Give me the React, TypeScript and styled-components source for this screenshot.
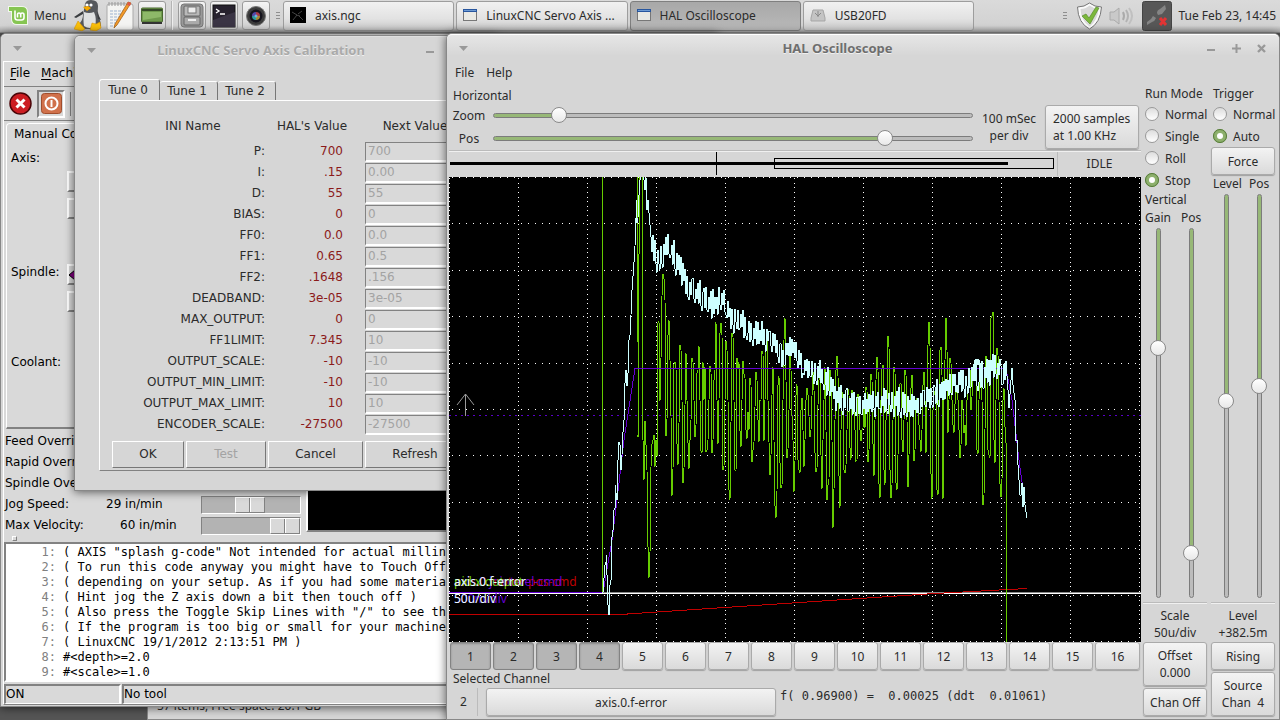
import React from 'react'
import styled, { createGlobalStyle, css } from 'styled-components'

const GlobalStyle = createGlobalStyle`
  * {
    box-sizing: border-box;
  }

  body {
    margin: 0;
    overflow: hidden;
    background: #555;
  }

  button, input {
    font: inherit;
    color: inherit;
    margin: 0;
  }
`

const gtkFont = css`
  font-family: 'Noto Sans', 'Open Sans', sans-serif;
  font-size: 12px;
  line-height: 17px;
  color: #2b2b2b;
`

const tkFont = css`
  font-family: 'DejaVu Sans', sans-serif;
  font-size: 12px;
  line-height: 17px;
`

const raised = css`
  border: 2px solid;
  border-color: #fff #828282 #828282 #fff;
`

const sunken = css`
  border: 2px solid;
  border-color: #828282 #fff #fff #828282;
`

const Desktop = styled.div`
  position: relative;
  height: 100vh;
  overflow: hidden;
  ${gtkFont}
`

/* ---------- panel ---------- */

const Panel = styled.header`
  display: flex;
  align-items: center;
  height: 33px;
  padding: 0 4px 1px 8px;
  background: linear-gradient(#dadada, #d2d2d2 80%, #a9a9a9);
  border-bottom: 1px solid #8a8a8a;
`

const MenuButton = styled.button`
  display: flex;
  align-items: center;
  gap: 6px;
  width: 66px;
  padding: 0;
  border: 0;
  background: none;
`

const Launchers = styled.nav`
  display: flex;
  align-items: center;
  gap: 4px;
`

const Launcher = styled.button<{ $flat?: boolean }>`
  display: flex;
  align-items: center;
  justify-content: center;
  width: 28px;
  height: 29px;
  padding: 0;
  border: ${p => (p.$flat ? '0' : '1px solid #9b9b9b')};
  border-radius: 3px;
  background: ${p => (p.$flat ? 'none' : 'linear-gradient(#f4f4f4, #cfcfcf)')};
`

const PanelLine = styled.span`
  width: 2px;
  height: 29px;
  margin: 0 1px;
  border-left: 1px solid #b4b4b4;
  border-right: 1px solid #eee;
`

const Handle = styled.span`
  width: 4px;
  height: 7px;
  margin: 0 3px 0 6px;
  background: repeating-linear-gradient(#8e8e8e 0 1px, transparent 1px 3px);
`

const Tasks = styled.div`
  display: flex;
  gap: 2px;
  flex: 0 1 691px;
`

const Task = styled.button<{ $active?: boolean }>`
  display: flex;
  align-items: center;
  gap: 9px;
  flex: 1;
  height: 30px;
  padding: 0 0 1px 6px;
  border: 1px solid ${p => (p.$active ? '#7f7f7f' : '#9d9d9d')};
  border-radius: 3px;
  background: ${p => (p.$active ? 'linear-gradient(#a8a8a8, #b9b9b9)' : 'linear-gradient(#f1f1f1, #e2e2e2 60%, #c8c8c8)')};
  white-space: nowrap;
`

const Tray = styled.div`
  display: flex;
  align-items: center;
  gap: 6px;
  margin-left: auto;
`

/* ---------- window frame ---------- */

const Window = styled.section<{ $x: number; $y: number; $w?: number; $h?: number }>`
  position: absolute;
  left: ${p => p.$x}px;
  top: ${p => p.$y}px;
  ${p => (p.$w ? `width: ${p.$w}px;` : 'right: 0;')}
  ${p => (p.$h ? `height: ${p.$h}px;` : 'bottom: 0;')}
  display: flex;
  flex-direction: column;
  border: 1px solid #888;
  border-radius: 6px 6px 0 0;
  background: #d6d6d6;
  box-shadow: 0 1px 10px rgba(0, 0, 0, 0.6);
`

const TitleBar = styled.header<{ $dim?: boolean }>`
  display: flex;
  align-items: center;
  flex: 0 0 27px;
  padding: 0 12px 0 11px;
  border-top: 1px solid ${p => (p.$dim ? '#e0e0e0' : '#fff')};
  border-radius: 5px 5px 0 0;
  background: ${p => (p.$dim ? '#d6d6d6' : 'linear-gradient(#e6e6e6, #d6d6d6 80%)')};
  color: ${p => (p.$dim ? '#aaa' : '#6e6e6e')};
  text-shadow: 0 1px #f0f0f0;
`

const WindowTitle = styled.h1`
  flex: 1;
  margin: 0;
  padding: 0 7px;
  font-size: 13px;
  line-height: 17px;
  font-weight: 700;
  text-align: center;
`

const TitleButton = styled.button`
  display: flex;
  justify-content: center;
  width: 11px;
  padding: 0;
  border: 0;
  background: none;
  color: #999;
`

const TitleButtons = styled.div`
  display: flex;
  gap: 14px;
`

/* ---------- axis ---------- */

const AxisBody = styled.div`
  display: flex;
  flex-direction: column;
  flex: 1;
  min-height: 0;
  margin: 0 2px 1px;
  border: 1px solid;
  border-color: #fff #828282 #828282 #fff;
  background: #d9d9d9;
  color: #000;
  ${tkFont}
`

const AxisMenu = styled.nav`
  display: flex;
  gap: 11px;
  padding: 3px 6px 4px;
  border-bottom: 1px solid #828282;

  u {
    text-underline-offset: 2px;
  }
`

const AxisTools = styled.div`
  display: flex;
  align-items: center;
  gap: 5px;
  flex: 0 0 34px;
  padding: 0 5px;
  border-bottom: 1px solid #828282;
`

const ToolButton = styled.button<{ $pressed?: boolean }>`
  display: flex;
  align-items: center;
  justify-content: center;
  width: ${p => (p.$pressed ? 28 : 23)}px;
  height: 28px;
  padding: 0;
  border: 0;
  background: none;
  ${p => p.$pressed && sunken}
`

const ToolLine = styled.span`
  height: 24px;
  border-left: 1px solid #828282;
`

const ManualTab = styled.div`
  width: 120px;
  margin: 2px 0 0 2px;
  padding: 2px 7px 1px;
  border: solid #fff;
  border-width: 1px 0 0 1px;
  border-radius: 4px 0 0 0;
`

const ManualPane = styled.div`
  display: grid;
  grid-template-columns: 56px 90px;
  grid-template-rows: 21px 48px 45px 48px 42px auto;
  flex: 0 0 285px;
  margin-left: 2px;
  padding: 6px 4px;
  border: solid;
  border-width: 0 2px 2px 1px;
  border-color: #fff #828282 #828282 #fff;
`

const PaneLabel = styled.span<{ $row: number }>`
  grid-row: ${p => p.$row};
`

const ButtonPair = styled.div<{ $row: number }>`
  display: flex;
  flex-direction: column;
  gap: 6px;
  grid-column: 2;
  grid-row: ${p => p.$row};
`

const PaneButton = styled.button`
  ${raised}
  display: flex;
  align-items: center;
  height: 21px;
  padding: 0;
  background: #d9d9d9;
`

const OverrideArea = styled.div`
  display: flex;
`

const Overrides = styled.div`
  display: grid;
  grid-template-columns: 92px 104px 104px;
  grid-auto-rows: 21px;
  align-items: center;
  padding: 2px 0 0 1px;
  white-space: nowrap;
`

const WideLabel = styled.span`
  grid-column: 1 / -1;
`

const Readout = styled.span<{ $inset: number }>`
  padding-left: ${p => p.$inset}px;
`

const TkRange = styled.input`
  appearance: none;
  width: 100px;
  height: 18px;
  border: 1px solid;
  border-color: #828282 #fff #fff #828282;
  background: #b3b3b3;

  &::-webkit-slider-thumb {
    appearance: none;
    width: 30px;
    height: 16px;
    border: 1px solid;
    border-color: #fff #828282 #828282 #fff;
    background: linear-gradient(90deg, #d9d9d9 13px, #828282 13px 14px, #fff 14px 15px, #d9d9d9 15px);
  }
`

const Preview = styled.div`
  flex: 1;
  margin: 0 0 4px 1px;
  border: 2px solid;
  border-color: #fff #828282 #828282 #fff;
  background: #000;
`

const Sash = styled.div`
  flex: none;
  width: 5px;
  height: 5px;
  margin: 0 0 1px 8px;
  border: 1px solid;
  border-color: #fff #828282 #828282 #fff;
`

const Listing = styled.ol`
  flex: 1;
  min-height: 0;
  margin: 0;
  padding: 1px 0;
  list-style: none;
  overflow: hidden;
  ${sunken}
  background: #fff;
  font-family: 'DejaVu Sans Mono', monospace;
  font-size: 12px;
  line-height: 15px;
`

const CodeLine = styled.li`
  display: flex;
  gap: 7px;
  white-space: pre;
`

const LineNo = styled.span`
  width: 50px;
  color: #808080;
  text-align: right;
`

const StatusBar = styled.footer`
  display: grid;
  grid-template-columns: 117px 1fr;
  gap: 1px;
  padding: 2px 0 0;
`

const StatusCell = styled.div`
  ${sunken}
  border-bottom-width: 1px;
`

/* ---------- calibration ---------- */

const CalBody = styled.div`
  display: flex;
  flex-direction: column;
  flex: 1;
  padding: 16px 20px 21px 24px;
  ${tkFont}
`

const Tabs = styled.div`
  display: flex;
  align-items: flex-end;
`

const Tab = styled.button<{ $on?: boolean }>`
  width: ${p => (p.$on ? 61 : 58)}px;
  height: ${p => (p.$on ? 22 : 19)}px;
  margin-bottom: ${p => (p.$on ? -1 : 0)}px;
  padding: 0 3px 0 0;
  border: solid;
  border-width: 1px 1px 0 ${p => (p.$on ? 1 : 0)}px;
  border-color: #fff #777 #fff #fff;
  border-radius: 3px 3px 0 0;
  background: #d6d6d6;
`

const TabPane = styled.div`
  flex: 1;
  padding: 14px 0 2px 12px;
  border: 1px solid;
  border-color: #fff #828282 #828282 #fff;
`

const ParamTable = styled.table`
  width: 368px;
  table-layout: fixed;
  border-collapse: collapse;

  th, td {
    height: 21px;
    padding: 0;
    font-weight: 400;
  }

  thead th {
    height: 26px;
    padding-bottom: 4px;
  }

  tbody th {
    padding-right: 9px;
    text-align: right;
  }
`

const HalValue = styled.td`
  && {
    padding-right: 7px;
    color: #8b1a1a;
    text-align: right;
  }
`

const Entry = styled.input`
  display: block;
  width: 100px;
  height: 20px;
  margin-left: 15px;
  padding: 0 2px;
  ${sunken}
  border-width: 1px 2px 2px 1px;
  background: #d9d9d9;
  color: #a3a3a3;
`

const CalActions = styled.div`
  display: flex;
  gap: 2px;
  margin-top: 6px;
`

const TkButton = styled.button<{ $w: number }>`
  width: ${p => p.$w}px;
  height: 27px;
  padding: 0;
  border: 1px solid;
  border-color: #fff #777 #777 #fff;
  background: #d6d6d6;

  &:disabled {
    color: #a3a3a3;
  }
`

/* ---------- oscilloscope ---------- */

const ScopeMenu = styled.nav`
  display: flex;
  gap: 12px;
  flex: 0 0 23px;
  padding: 3px 8px;
`

const ScopeBody = styled.div`
  display: flex;
  flex: 1;
  min-height: 0;
  padding: 0 0 3px 2px;
`

const ScopeMain = styled.div`
  display: flex;
  flex-direction: column;
  flex: 1;
  min-width: 0;
`

const ScopeSide = styled.div`
  display: grid;
  grid-template-columns: 64px 64px;
  grid-template-rows: minmax(0, 1fr);
  gap: 4px;
  flex: 0 0 138px;
  padding: 1px 4px 0 2px;
`

const SideColumn = styled.div`
  display: flex;
  flex-direction: column;
  min-width: 0;
  min-height: 0;
`

const SideLabel = styled.div`
  padding-left: 2px;
  height: 18px;
  white-space: nowrap;
`

const SliderLabels = styled.div`
  display: grid;
  grid-template-columns: 30px 1fr;
  gap: 6px;
  height: 19px;
  padding-left: 2px;
  white-space: nowrap;
`

const RadioLabel = styled.label`
  display: flex;
  align-items: center;
  gap: 6px;
  height: 22px;
  padding-left: 2px;
`

const Radio = styled.input`
  appearance: none;
  flex: none;
  width: 14px;
  height: 14px;
  border: 1px solid #999;
  border-radius: 50%;
  background: linear-gradient(#ddd, #fff);

  &:checked {
    border: 4px solid #8db06c;
    outline: 1px solid #567a39;
    outline-offset: -1px;
    background: #fff;
  }
`

const GtkButton = styled.button<{ $on?: boolean; $left?: boolean }>`
  min-height: 28px;
  padding: 0 ${p => (p.$left ? 7 : 1)}px;
  border: 1px solid ${p => (p.$on ? '#838383' : '#aaa')};
  border-radius: 3px;
  background: ${p => (p.$on ? '#b5b5b5' : 'linear-gradient(#f3f3f3, #dadada)')};
  box-shadow: ${p => (p.$on ? 'inset 0 1px 2px #8a8a8a' : '0 1px 1px rgba(0, 0, 0, 0.25)')};
  text-align: ${p => (p.$left ? 'left' : 'center')};
  white-space: pre;
`

const TallButton = styled(GtkButton)`
  flex: 1;
`

const TimebaseButton = styled(GtkButton)`
  height: 44px;
`

const knob = css`
  appearance: none;
  width: 16px;
  height: 16px;
  border: 1px solid #8a8a8a;
  border-radius: 50%;
  background: linear-gradient(#fff, #e8e8e8);
`

const HRange = styled.input`
  appearance: none;
  width: 100%;
  height: 16px;
  background: none;

  &::-webkit-slider-runnable-track {
    height: 5px;
    border: 1px solid #7c7c7c;
    border-radius: 3px;
    background: linear-gradient(90deg, #97b877 ${p => Number(p.defaultValue) / 10}%, #bcbcbc 0);
  }

  &::-webkit-slider-thumb {
    ${knob}
    margin-top: -7px;
  }
`

const VRange = styled.input`
  appearance: none;
  writing-mode: vertical-lr;
  align-self: stretch;
  width: 16px;
  background: none;

  &::-webkit-slider-runnable-track {
    width: 5px;
    border: 1px solid #7c7c7c;
    border-radius: 3px;
    background: linear-gradient(#97b877 ${p => Number(p.defaultValue) / 10}%, #bcbcbc 0);
  }

  &::-webkit-slider-thumb {
    ${knob}
    margin-left: -7px;
  }
`

const VSliders = styled.div`
  display: flex;
  gap: 17px;
  flex: 1;
  min-height: 0;
  padding: 0 0 0 7px;
`

const SideReadout = styled.div`
  margin: 4px 0 0;
  padding: 4px 0 1px;
  border-top: 1px solid #bbb;
  box-shadow: inset 0 1px #f0f0f0;
  text-align: center;
`

const SideButtons = styled.div`
  display: flex;
  flex-direction: column;
  gap: 2px;
  flex: 0 0 74px;
`

const HorizontalRow = styled.div`
  display: grid;
  grid-template-columns: minmax(0, 1fr) 72px 94px;
  align-items: center;
  padding-right: 2px;
  border-bottom: 1px solid #bbb;
`

const HSliders = styled.div`
  display: grid;
  grid-template-columns: 40px minmax(0, 1fr);
  grid-auto-rows: 23px;
  align-items: center;
  column-gap: 4px;
  text-align: center;
`

const Centered = styled.div`
  text-align: center;
`

const GroupTitle = styled.div`
  flex: 0 0 20px;
  padding: 3px 4px 0;
`

const OverviewRow = styled.div`
  display: grid;
  grid-template-columns: minmax(0, 1fr) 84px;
  align-items: start;
  flex: 0 0 26px;
  border-top: 1px solid #f0f0f0;

  svg {
    display: block;
    width: 100%;
    height: 24px;
  }
`

const Status = styled.div`
  height: 24px;
  padding-top: 3px;
  border-left: 1px solid #bbb;
  text-align: center;
`

const Plot = styled.svg`
  display: block;
  flex: 1;
  width: 100%;
  min-height: 0;
  background: #000;
`

const Channels = styled.div`
  display: grid;
  grid-template-columns: repeat(15, minmax(0, 41fr)) minmax(0, 45fr);
  gap: 2px;
  padding: 0 1px;
`

const SelectedTitle = styled.div`
  height: 18px;
  padding: 0 4px;
`

const ChannelBar = styled.div`
  display: grid;
  grid-template-columns: 28px 290px 1fr;
  gap: 8px;
  padding: 0 1px;
`

const ChannelNo = styled.div`
  padding-top: 5px;
  border-right: 1px solid #bbb;
  text-align: center;
`

const Probe = styled.output`
  margin-left: -4px;
  font-family: 'DejaVu Sans Mono', monospace;
  font-size: 12px;
  white-space: pre;
`

const FileManager = styled.div`
  position: absolute;
  left: 147px;
  right: 0;
  bottom: 0;
  height: 24px;
  padding: 0 9px;
  border: 1px solid #888;
  background: #d6d6d6;
`

/* ---------- data ---------- */

const params = [
  ['P', '700', '700'],
  ['I', '.15', '0.00'],
  ['D', '55', '55'],
  ['BIAS', '0', '0'],
  ['FF0', '0.0', '0.0'],
  ['FF1', '0.65', '0.5'],
  ['FF2', '.1648', '.156'],
  ['DEADBAND', '3e-05', '3e-05'],
  ['MAX_OUTPUT', '0', '0'],
  ['FF1LIMIT', '7.345', '10'],
  ['OUTPUT_SCALE', '-10', '-10'],
  ['OUTPUT_MIN_LIMIT', '-10', '-10'],
  ['OUTPUT_MAX_LIMIT', '10', '10'],
  ['ENCODER_SCALE', '-27500', '-27500'],
]

const gcode = [
  '( AXIS "splash g-code" Not intended for actual milling )',
  '( To run this code anyway you might have to Touch Off the Z axis',
  '( depending on your setup. As if you had some material in your mill',
  '( Hint jog the Z axis down a bit then touch off )',
  '( Also press the Toggle Skip Lines with "/" to see that part',
  '( If the program is too big or small for your machine, change',
  '( LinuxCNC 19/1/2012 2:13:51 PM )',
  '#<depth>=2.0',
  '#<scale>=1.0',
]

// pid output, screen units
const outputTrace =
  '602,592 602,160 637,160 637,342 638,340 638,437 639,255 640,177 642,160 642,425 643,440 644,480 645,421 646,445 647,470 648,547 649,578 650,553 651,467 652,444 653,440 654,435 655,467 656,440 657,456 ' +
  '657,390 658,323 659,321 660,401 661,358 662,296 663,274 664,279 665,300 666,436 667,420 668,335 669,320 670,360 671,416 672,496 673,470 674,364 675,362 676,368 677,444 678,465 679,424 680,345 681,350 ' +
  '682,400 683,483 684,468 685,405 686,353 687,400 688,443 689,469 690,440 691,420 692,358 693,362 695,437 696,425 697,373 698,370 699,346 700,400 701,451 702,453 703,362 704,400 705,367 706,452 707,450 ' +
  '708,440 709,400 710,366 711,372 712,453 713,440 714,380 715,370 716,322 717,400 718,444 719,400 720,333 721,323 722,335 723,470 724,467 725,400 726,341 727,350 728,400 729,490 730,500 731,423 732,333 ' +
  '733,337 734,400 735,470 736,471 737,358 738,368 739,362 740,431 741,447 742,400 743,361 744,374 745,378 746,430 747,439 748,412 749,430 750,378 751,385 752,462 753,450 754,442 755,407 756,372 757,380 ' +
  '758,420 759,442 760,400 761,400 762,351 763,354 764,441 765,400 766,350 767,331 768,400 769,442 770,475 771,455 772,395 773,367 774,440 775,506 776,518 777,492 778,385 779,376 780,463 781,488 782,486 ' +
  '783,400 784,340 785,318 786,380 787,458 788,449 789,410 790,352 791,370 792,416 793,440 794,492 795,462 796,395 797,384 798,460 799,470 800,473 801,410 802,398 803,430 804,467 805,440 806,400 807,388 ' +
  '808,395 810,437 811,430 812,396 813,372 814,390 815,453 816,472 817,468 818,405 819,380 820,375 821,455 822,489 823,440 824,400 825,367 826,430 827,500 828,485 829,480 830,370 831,380 832,440 833,528 ' +
  '834,490 835,420 836,370 837,356 838,376 839,476 840,508 841,430 842,392 843,398 844,470 845,473 846,465 847,430 848,389 849,395 850,448 851,460 852,390 853,395 854,408 855,430 856,461 857,460 858,394 ' +
  '859,400 860,430 861,441 862,430 863,428 864,400 865,428 866,387 867,390 868,462 869,450 870,395 871,374 872,380 873,444 874,476 875,420 876,380 877,357 878,370 879,484 880,498 881,400 882,369 883,365 ' +
  '884,470 885,485 886,420 887,400 888,336 889,347 890,470 891,498 892,485 893,420 894,367 895,372 896,483 897,490 898,455 899,400 900,384 901,383 902,440 903,452 904,420 905,370 906,375 907,420 908,487 ' +
  '909,455 910,400 911,388 912,375 913,400 914,461 915,450 916,400 917,398 918,405 919,425 920,440 921,452 922,430 923,385 924,372 925,400 926,453 927,390 928,345 929,322 930,346 931,474 932,499 933,410 ' +
  '934,395 936,387 937,490 938,495 939,400 940,350 941,347 942,375 943,499 944,400 945,360 946,318 947,350 948,433 949,400 950,358 951,363 952,400 953,425 954,433 955,404 956,391 957,393 958,400 959,430 ' +
  '960,458 961,445 962,400 963,410 964,433 965,425 966,446 967,400 968,390 970,369 971,410 972,397 973,372 974,365 976,368 977,450 978,454 979,400 980,378 981,375 982,400 983,505 984,495 985,430 986,356 ' +
  '987,363 988,450 989,455 990,458 991,318 992,316 993,312 994,440 995,463 996,400 997,348 998,355 999,400 1000,484 1001,497 1002,480 1003,400 1004,388 1005,427 1006,443 1006,642'

const errorRise =
  '449,592 603,592 604,578 605,565 606,562 606,555 607,575 607,600 608,605 609,615 609,590 611,580 611,545 613,530 614,510 615,508 615,485 617,500 617,475 618,460 619,442 620,445 621,470 622,455 623,432 ' +
  '624,420 624,400 625,383 626,370 627,386 628,373 629,340 630,335 631,315 632,290 634,262 635,246 636,218 636,200 637,223 638,218 639,195 640,180 641,174 643,170 645,190 646,178 647,210 648,200 650,225 651,237 652,252'

const errorFall =
  '1008,390 1009,408 1011,380 1012,368 1013,385 1015,400 1015,440 1017,440 1018,465 1020,495 1021,495 1022,483 1023,507 1024,487 1025,505 1026,512 1026,518'

// centre and swing of the f-error band
const errorBand = [
  [652, 240, 13], [657, 262, 14], [662, 255, 15], [667, 247, 16], [671, 250, 14], [676, 262, 16], [682, 272, 15], [688, 290, 15],
  [697, 295, 16], [702, 298, 14], [708, 305, 14], [714, 308, 16], [720, 300, 13], [726, 305, 14], [731, 320, 13], [740, 320, 14],
  [747, 330, 14], [757, 335, 14], [769, 338, 14], [776, 346, 14], [783, 360, 12], [790, 345, 14], [797, 352, 13], [802, 366, 13],
  [810, 369, 14], [820, 375, 14], [828, 382, 16], [835, 395, 15], [842, 402, 15], [850, 405, 13], [860, 407, 12], [870, 405, 13],
  [880, 402, 14], [890, 402, 14], [900, 404, 14], [910, 408, 13], [920, 405, 13], [927, 398, 15], [935, 397, 16], [945, 390, 14],
  [957, 380, 12], [965, 385, 15], [975, 375, 15], [983, 378, 15], [990, 372, 16], [995, 365, 13], [1000, 375, 15], [1007, 375, 15],
]

const swing = [-1, 0.6, 0.9, -0.7, 0.3, -0.9, 0.8]

const bandPoints = () => {
  const out: string[] = []
  let seg = 0
  for (let x = 652; x < 1007; x += 1) {
    while (x > errorBand[seg + 1][0]) seg += 1
    const [x0, y0, a0] = errorBand[seg]
    const [x1, y1, a1] = errorBand[seg + 1]
    const t = (x - x0) / (x1 - x0)
    const mid = y0 + (y1 - y0) * t
    const amp = a0 + (a1 - a0) * t
    const rnd = Math.abs(Math.sin(x * 12.9898) * 43758.5453) % 1
    const side = swing[(x + Math.floor(x / 11)) % 7]
    out.push(`${x},${Math.round(mid + side * amp * (0.5 + 0.7 * rnd))}`)
  }
  return out.join(' ')
}

const errorTrace = `${errorRise} ${bandPoints()} ${errorFall}`
const steps = Array.from({ length: 11 }, (_, i) => i)

/* ---------- icons ---------- */

const WinMenuIcon = () => (
  <svg width="11" height="7"><path d="M1 1h9L5.500 6z" fill="currentColor" /></svg>
)

const MinIcon = () => (
  <svg width="9" height="9"><path d="M0 6h8" stroke="currentColor" strokeWidth="2" /></svg>
)

const MaxIcon = () => (
  <svg width="9" height="9"><path d="M0 4.500h9M4.500 0v9" stroke="currentColor" strokeWidth="2" /></svg>
)

const CloseIcon = () => (
  <svg width="9" height="9"><path d="M1 1l7 7M8 1l-7 7" stroke="currentColor" strokeWidth="2.400" /></svg>
)

const MintIcon = () => (
  <svg width="20" height="19" viewBox="0 0 20 19">
    <path d="M0 0h14q6 0 6 6v13H9q-6 0-6-6V6H0z" fill="#f2f8ec" />
    <path d="M1 1h13q5 0 5 5v12H9q-5 0-5-5V5H1z" fill="#86c552" />
    <path d="M7 4.500v7q0 2.500 2.500 2.500h4q2.500 0 2.500-2.500V9q0-2-1.700-2T12.700 9v2.500M12.700 9q0-2-1.700-2T9.500 9v2.500" fill="none" stroke="#fff" strokeWidth="1.600" />
  </svg>
)

const TuxIcon = () => (
  <svg width="28" height="31" viewBox="0 0 28 31">
    <path d="M11 4q1-4 6-4 7 0 7 6-1 5 1 11t2 9l-5 3H8l-3-5q4-4 4-9z" fill="#55585c" />
    <path d="M10 12q5 2 10 0 3 7 1 14-5 4-11 0-1-5 0-14z" fill="#dfe1e2" />
    <path d="M9 11L0 17l2 1 7-4zM23 12l4 8-3-1z" fill="#3a3d40" />
    <circle cx="13" cy="5" r="1.600" fill="#fff" /><circle cx="17" cy="5" r="1.600" fill="#fff" />
    <path d="M9 7l5-1 3 2-4 3z" fill="#f5a800" />
    <path d="M4 21l7 8-3 2-8-2zM18 23l4 1 4-2 1 6-5 3-6-1z" fill="#fbc10b" stroke="#d58b00" strokeWidth=".5" />
  </svg>
)

const NotesIcon = () => (
  <svg width="28" height="30" viewBox="0 0 28 30">
    <rect x="1" y="3" width="26" height="26" rx="2" fill="#f4f4f2" stroke="#aaa" />
    <path d="M3 1v4M6 1v4M9 1v4M12 1v4M15 1v4M18 1v4" stroke="#999" />
    <path d="M4 10h15M4 13h13M4 16h11M4 19h9M4 22h6M4 25h5" stroke="#9eb3cf" strokeDasharray="3 1" />
    <path d="M22 1l3 1-14 22-3 3 1-4z" fill="#f49a28" stroke="#9a5a14" strokeWidth=".7" />
    <path d="M22 1l3 1-1 3-3-1z" fill="#de5746" />
  </svg>
)

const DesktopIcon = () => (
  <svg width="22" height="20" viewBox="0 0 22 20">
    <rect x=".5" y="2" width="21" height="14" rx="1" fill="#6f9a4d" stroke="#48672f" />
    <path d="M1 3h20v2H1z" fill="#354a28" /><path d="M2 6h18v5L2 14z" fill="#8eb969" />
    <path d="M1 16h20v2H1z" fill="#333" />
  </svg>
)

const CabinetIcon = () => (
  <svg width="24" height="25" viewBox="0 0 24 25">
    <rect x="1" y="1" width="22" height="23" rx="3" fill="#999" stroke="#777" />
    <rect x="4" y="3" width="16" height="10" rx="1" fill="#b9b9b9" stroke="#666" />
    <rect x="8" y="4" width="8" height="6" fill="#ececec" stroke="#777" />
    <rect x="4" y="14" width="16" height="8" rx="1" fill="#aaa" stroke="#666" />
    <path d="M8 16h8v2H8z" fill="#eee" />
  </svg>
)

const TerminalIcon = () => (
  <svg width="24" height="24" viewBox="0 0 24 24">
    <rect x="1" y="1" width="22" height="22" fill="#27222e" stroke="#111" />
    <path d="M1 16L23 8v15H1z" fill="#3a3444" />
    <path d="M4 5l3 2-3 2M8 10h5" fill="none" stroke="#fff" strokeWidth="1.300" />
  </svg>
)

const CameraIcon = () => (
  <svg width="24" height="24" viewBox="0 0 24 24">
    <circle cx="12" cy="12" r="9.500" fill="#3c3c3c" stroke="#777" />
    <circle cx="12" cy="12" r="6.500" fill="#15141d" />
    <path d="M12 8a4 4 0 0 1 4 4l-4 0z" fill="#a63b49" /><path d="M12 16a4 4 0 0 1-4-4l4 0z" fill="#2e9a9a" />
    <path d="M8 12a4 4 0 0 1 4-4l0 4z" fill="#5548a8" /><path d="M16 12a4 4 0 0 1-4 4l0-4z" fill="#a38b34" />
    <circle cx="12" cy="12" r="1.500" fill="#6fb0e0" />
  </svg>
)

const GcodeIcon = () => (
  <svg width="16" height="16" viewBox="0 0 16 16">
    <rect width="16" height="16" fill="#000" />
    <path d="M2 5l5 3-4 5M8 7l4-3M9 9l4 4M6 8l4 1" fill="none" stroke="#444" />
  </svg>
)

const AppIcon = () => (
  <svg width="14" height="12" viewBox="0 0 14 12">
    <rect x=".5" y=".5" width="13" height="11" fill="#e9e9e4" stroke="#777" />
    <path d="M0 0h14v3H0z" fill="#28569e" /><path d="M1 1h12v1H1z" fill="#6d9ad2" />
  </svg>
)

const DriveIcon = () => (
  <svg width="16" height="13" viewBox="0 0 16 13">
    <path d="M3 1h10l2 8v3H1V9z" fill="#c4c4c4" stroke="#a5a5a5" />
    <path d="M8 2v6M5 4l3 3 3-3" fill="none" stroke="#888" />
  </svg>
)

const ShieldIcon = () => (
  <svg width="27" height="28" viewBox="0 0 27 28">
    <path d="M13.500 1q5 4 12 4-1 16-12 22Q2 21 1.500 5q7 0 12-4z" fill="#fafafa" stroke="#777" />
    <path d="M13.500 3.500q4 3 9 3.500-1 12-9 17.500Q5 19 4.500 7q5 0 9-3.500z" fill="#d9d9d9" />
    <path d="M6 14l4-2 3 4 7-11 3 1-9 16z" fill="#7cb83c" stroke="#4f8422" strokeWidth=".6" />
  </svg>
)

const SoundIcon = () => (
  <svg width="27" height="24" viewBox="0 0 27 24">
    <path d="M1 8h4l5-4v16l-5-4H1z" fill="#c9c9c9" stroke="#aaa" />
    <path d="M14 8q2 4 0 8" fill="none" stroke="#aaa" strokeWidth="2" />
    <path d="M17 6q4 6 0 12" fill="none" stroke="#b2b2b2" strokeWidth="2" />
    <path d="M20 4q6 8 0 16" fill="none" stroke="#c0c0c0" strokeWidth="2" />
  </svg>
)

const NetworkIcon = () => (
  <svg width="30" height="30" viewBox="0 0 30 30">
    <rect x=".5" y=".5" width="29" height="29" rx="2" fill="#575757" stroke="#444" />
    <path d="M15 12q0-3 3-4l5-4 1 4-4 5-4 1zM14 17q-1 3-4 4l-5 3v-3l4-3 2-3z" fill="#858585" />
    <path d="M18 17l6 7M24 17l-6 7" stroke="#e23434" strokeWidth="3" />
  </svg>
)

const EstopIcon = () => (
  <svg width="23" height="23" viewBox="0 0 23 23">
    <circle cx="11.500" cy="11.500" r="10.500" fill="#cc1d22" stroke="#4c0508" strokeWidth="1.500" />
    <path d="M7.500 7.500l8 8M15.500 7.500l-8 8" stroke="#fff" strokeWidth="3" />
  </svg>
)

const PowerIcon = () => (
  <svg width="21" height="21" viewBox="0 0 21 21">
    <rect x=".5" y=".5" width="20" height="20" rx="3" fill="#d0714b" stroke="#a04d2c" />
    <circle cx="10.500" cy="10.500" r="6" fill="none" stroke="#fff" strokeWidth="2" />
    <path d="M10.500 7v7" stroke="#fff" strokeWidth="2" />
  </svg>
)

const SpindleIcon = () => (
  <svg width="12" height="12"><path d="M0 6l6-5v10z" fill="#80007f" stroke="#000" /></svg>
)

/* ---------- parts ---------- */

const TitleRow = ({ title, dim }: { title: string; dim?: boolean }) => (
  <TitleBar $dim={dim}>
    <TitleButton aria-label="Window menu"><WinMenuIcon /></TitleButton>
    <WindowTitle>{title}</WindowTitle>
    <TitleButtons>
      <TitleButton aria-label="Minimize"><MinIcon /></TitleButton>
      <TitleButton aria-label="Maximize"><MaxIcon /></TitleButton>
      <TitleButton aria-label="Close"><CloseIcon /></TitleButton>
    </TitleButtons>
  </TitleBar>
)

const TopPanel = () => (
  <Panel>
    <MenuButton><MintIcon />Menu</MenuButton>
    <Launchers>
      <Launcher $flat aria-label="Tux"><TuxIcon /></Launcher>
      <Launcher $flat aria-label="Notes"><NotesIcon /></Launcher>
      <Launcher aria-label="Show desktop"><DesktopIcon /></Launcher>
      <PanelLine />
      <Launcher aria-label="Files"><CabinetIcon /></Launcher>
      <Launcher aria-label="Terminal"><TerminalIcon /></Launcher>
      <Launcher aria-label="Camera"><CameraIcon /></Launcher>
    </Launchers>
    <Handle />
    <Tasks>
      <Task><GcodeIcon />axis.ngc</Task>
      <Task><AppIcon />LinuxCNC Servo Axis ...</Task>
      <Task $active><AppIcon />HAL Oscilloscope</Task>
      <Task><DriveIcon />USB20FD</Task>
    </Tasks>
    <Tray>
      <Handle />
      <ShieldIcon />
      <SoundIcon />
      <NetworkIcon />
      <time>Tue Feb 23, 14:45</time>
    </Tray>
  </Panel>
)

const AxisWindow = () => (
  <Window $x={0} $y={33} $w={720} $h={674}>
    <TitleRow title="" dim />
    <AxisBody>
      <AxisMenu><span><u>F</u>ile</span><span><u>M</u>achine</span></AxisMenu>
      <AxisTools>
        <ToolButton aria-label="Emergency stop"><EstopIcon /></ToolButton>
        <ToolButton $pressed aria-label="Power"><PowerIcon /></ToolButton>
        <ToolLine />
      </AxisTools>
      <ManualTab>Manual Control</ManualTab>
      <ManualPane>
        <PaneLabel $row={1}>Axis:</PaneLabel>
        <ButtonPair $row={2}>
          <PaneButton aria-label="Home axis" />
          <PaneButton aria-label="Touch off" />
        </ButtonPair>
        <PaneLabel $row={4}>Spindle:</PaneLabel>
        <ButtonPair $row={4}>
          <PaneButton aria-label="Spindle reverse"><SpindleIcon /></PaneButton>
          <PaneButton aria-label="Spindle slower" />
        </ButtonPair>
        <PaneLabel $row={6}>Coolant:</PaneLabel>
      </ManualPane>
      <OverrideArea>
        <Overrides>
          <WideLabel>Feed Override:</WideLabel>
          <WideLabel>Rapid Override:</WideLabel>
          <WideLabel>Spindle Override:</WideLabel>
          <label htmlFor="jog">Jog Speed:</label>
          <Readout $inset={9}>29 in/min</Readout>
          <TkRange id="jog" type="range" defaultValue={49} />
          <label htmlFor="vel">Max Velocity:</label>
          <Readout $inset={23}>60 in/min</Readout>
          <TkRange id="vel" type="range" defaultValue={100} />
        </Overrides>
        <Preview />
      </OverrideArea>
      <Sash />
      <Listing>
        {gcode.map((line, i) => (
          <CodeLine key={line}><LineNo>{i + 1}:</LineNo>{line}</CodeLine>
        ))}
      </Listing>
      <StatusBar>
        <StatusCell>ON</StatusCell>
        <StatusCell>No tool</StatusCell>
      </StatusBar>
    </AxisBody>
  </Window>
)

const CalibrationWindow = () => (
  <Window $x={74} $y={35} $w={425} $h={456}>
    <TitleRow title="LinuxCNC Servo Axis Calibration" dim />
    <CalBody>
      <Tabs>
        <Tab $on>Tune 0</Tab>
        <Tab>Tune 1</Tab>
        <Tab>Tune 2</Tab>
      </Tabs>
      <TabPane>
        <ParamTable>
          <colgroup>
            <col width="162" />
            <col width="76" />
            <col width="130" />
          </colgroup>
          <thead>
            <tr><th>INI Name</th><th>HAL's Value</th><th>Next Value</th></tr>
          </thead>
          <tbody>
            {params.map(([name, value, next]) => (
              <tr key={name}>
                <th>{name}:</th>
                <HalValue>{value}</HalValue>
                <td><Entry aria-label={name} defaultValue={next} disabled /></td>
              </tr>
            ))}
          </tbody>
        </ParamTable>
        <CalActions>
          <TkButton $w={72}>OK</TkButton>
          <TkButton $w={80} disabled>Test</TkButton>
          <TkButton $w={95}>Cancel</TkButton>
          <TkButton $w={100}>Refresh</TkButton>
        </CalActions>
      </TabPane>
    </CalBody>
  </Window>
)

const ScopePlot = () => (
  <Plot viewBox="449 177 692 465" preserveAspectRatio="none" shapeRendering="crispEdges" fill="none">
    {steps.map(i => (
      <path key={`v${i}`} d={`M${Math.min(449.5 + i * 69, 1140.5)} 178v463`} stroke="#fff" strokeDasharray="1 3.640" />
    ))}
    {steps.map(i => (
      <path key={`h${i}`} d={`M452 ${Math.round(177 + i * 46.4)}.5h688`} stroke="#fff" strokeDasharray="1 5.900" />
    ))}
    <path d="M449 415.500h692" stroke="#5a00c8" strokeDasharray="2 4" />
    <path d="M449 592.500h692" stroke="#888" />
    <path d="M449 593.500h692" stroke="#fff" />
    <polyline points="449,614.5 620,614.5 830,600.5 935,593.5 1027,588.5" stroke="#c00000" />
    <polyline points={outputTrace} stroke="#66cc00" />
    <polyline points="449,592.500 603,592.500 612,540 617,500 624,440 635,368.500 1006,368.500 1012,400 1019,460 1026,512" stroke="#6400d2" />
    <polyline points={errorTrace} stroke="#ccffff" />
    <path d="M449 592.500h153" stroke="#6400d2" />
    <circle cx="977" cy="362" r="3" fill="#ccffff" />
    <path d="M465.500 394v22M457 405l8.500-11 8.500 11" stroke="#999" shapeRendering="auto" />
    <g fontSize="12" shapeRendering="auto">
      <text x="454" y="586" fill="#c00000">axis.0.motor-pos-cmd</text>
      <text x="454" y="586" fill="#6400d2">axis.0.joint-vel-cmd</text>
      <text x="454" y="586" fill="#66cc00">pid.x.output</text>
      <text x="454" y="586" fill="#e8ffff">axis.0.f-error</text>
      <text x="454" y="603" fill="#6400d2">500m/div</text>
      <text x="454" y="603" fill="#e8ffff">50u/div</text>
    </g>
  </Plot>
)

const ScopeWindow = () => (
  <Window $x={446} $y={33}>
    <TitleRow title="HAL Oscilloscope" />
    <ScopeMenu><span>File</span><span>Help</span></ScopeMenu>
    <ScopeBody>
      <ScopeMain>
        <GroupTitle>Horizontal</GroupTitle>
        <HorizontalRow>
          <HSliders>
            <label htmlFor="zoom">Zoom</label>
            <HRange id="zoom" type="range" max={1000} defaultValue={123} />
            <label htmlFor="hpos">Pos</label>
            <HRange id="hpos" type="range" max={1000} defaultValue={829} />
          </HSliders>
          <Centered>100 mSec<br />per div</Centered>
          <TimebaseButton $left>{'2000 samples\nat 1.00 KHz'}</TimebaseButton>
        </HorizontalRow>
        <OverviewRow>
          <svg viewBox="449 152 608 24" preserveAspectRatio="none" shapeRendering="crispEdges">
            <path d="M450 163.500h558" stroke="#000" strokeWidth="3" />
            <path d="M716.500 152v23" stroke="#000" />
            <rect x="774.500" y="158.500" width="279" height="10" fill="none" stroke="#000" />
          </svg>
          <Status>IDLE</Status>
        </OverviewRow>
        <ScopePlot />
        <Channels>
          {Array.from({ length: 16 }, (_, i) => (
            <GtkButton key={i} $on={i < 4}>{i + 1}</GtkButton>
          ))}
        </Channels>
        <SelectedTitle>Selected Channel</SelectedTitle>
        <ChannelBar>
          <ChannelNo>2</ChannelNo>
          <GtkButton>axis.0.f-error</GtkButton>
          <Probe>f( 0.96900) =  0.00025 (ddt  0.01061)</Probe>
        </ChannelBar>
      </ScopeMain>
      <ScopeSide>
        <SideColumn>
          <SideLabel>Run Mode</SideLabel>
          {['Normal', 'Single', 'Roll', 'Stop'].map(mode => (
            <RadioLabel key={mode}><Radio type="radio" name="run" defaultChecked={mode === 'Stop'} />{mode}</RadioLabel>
          ))}
          <SideLabel>Vertical</SideLabel>
          <SliderLabels><span>Gain</span><span>Pos</span></SliderLabels>
          <VSliders>
            <VRange type="range" aria-label="Gain" max={1000} defaultValue={316} />
            <VRange type="range" aria-label="Vertical position" max={1000} defaultValue={898} />
          </VSliders>
          <SideReadout>Scale<br />50u/div</SideReadout>
          <SideButtons>
            <TallButton>{'Offset\n0.000'}</TallButton>
            <GtkButton>Chan Off</GtkButton>
          </SideButtons>
        </SideColumn>
        <SideColumn>
          <SideLabel>Trigger</SideLabel>
          {['Normal', 'Auto'].map(mode => (
            <RadioLabel key={mode}><Radio type="radio" name="trigger" defaultChecked={mode === 'Auto'} />{mode}</RadioLabel>
          ))}
          <GtkButton>Force</GtkButton>
          <SliderLabels><span>Level</span><span>Pos</span></SliderLabels>
          <VSliders>
            <VRange type="range" aria-label="Level" max={1000} defaultValue={512} />
            <VRange type="range" aria-label="Trigger position" max={1000} defaultValue={475} />
          </VSliders>
          <SideReadout>Level<br />+382.5m</SideReadout>
          <SideButtons>
            <GtkButton>Rising</GtkButton>
            <TallButton>{'Source\nChan  4'}</TallButton>
          </SideButtons>
        </SideColumn>
      </ScopeSide>
    </ScopeBody>
  </Window>
)

const App = () => (
  <>
    <GlobalStyle />
    <Desktop>
      <TopPanel />
      <FileManager>57 items, Free space: 20.1 GB</FileManager>
      <AxisWindow />
      <CalibrationWindow />
      <ScopeWindow />
    </Desktop>
  </>
)

export default App
